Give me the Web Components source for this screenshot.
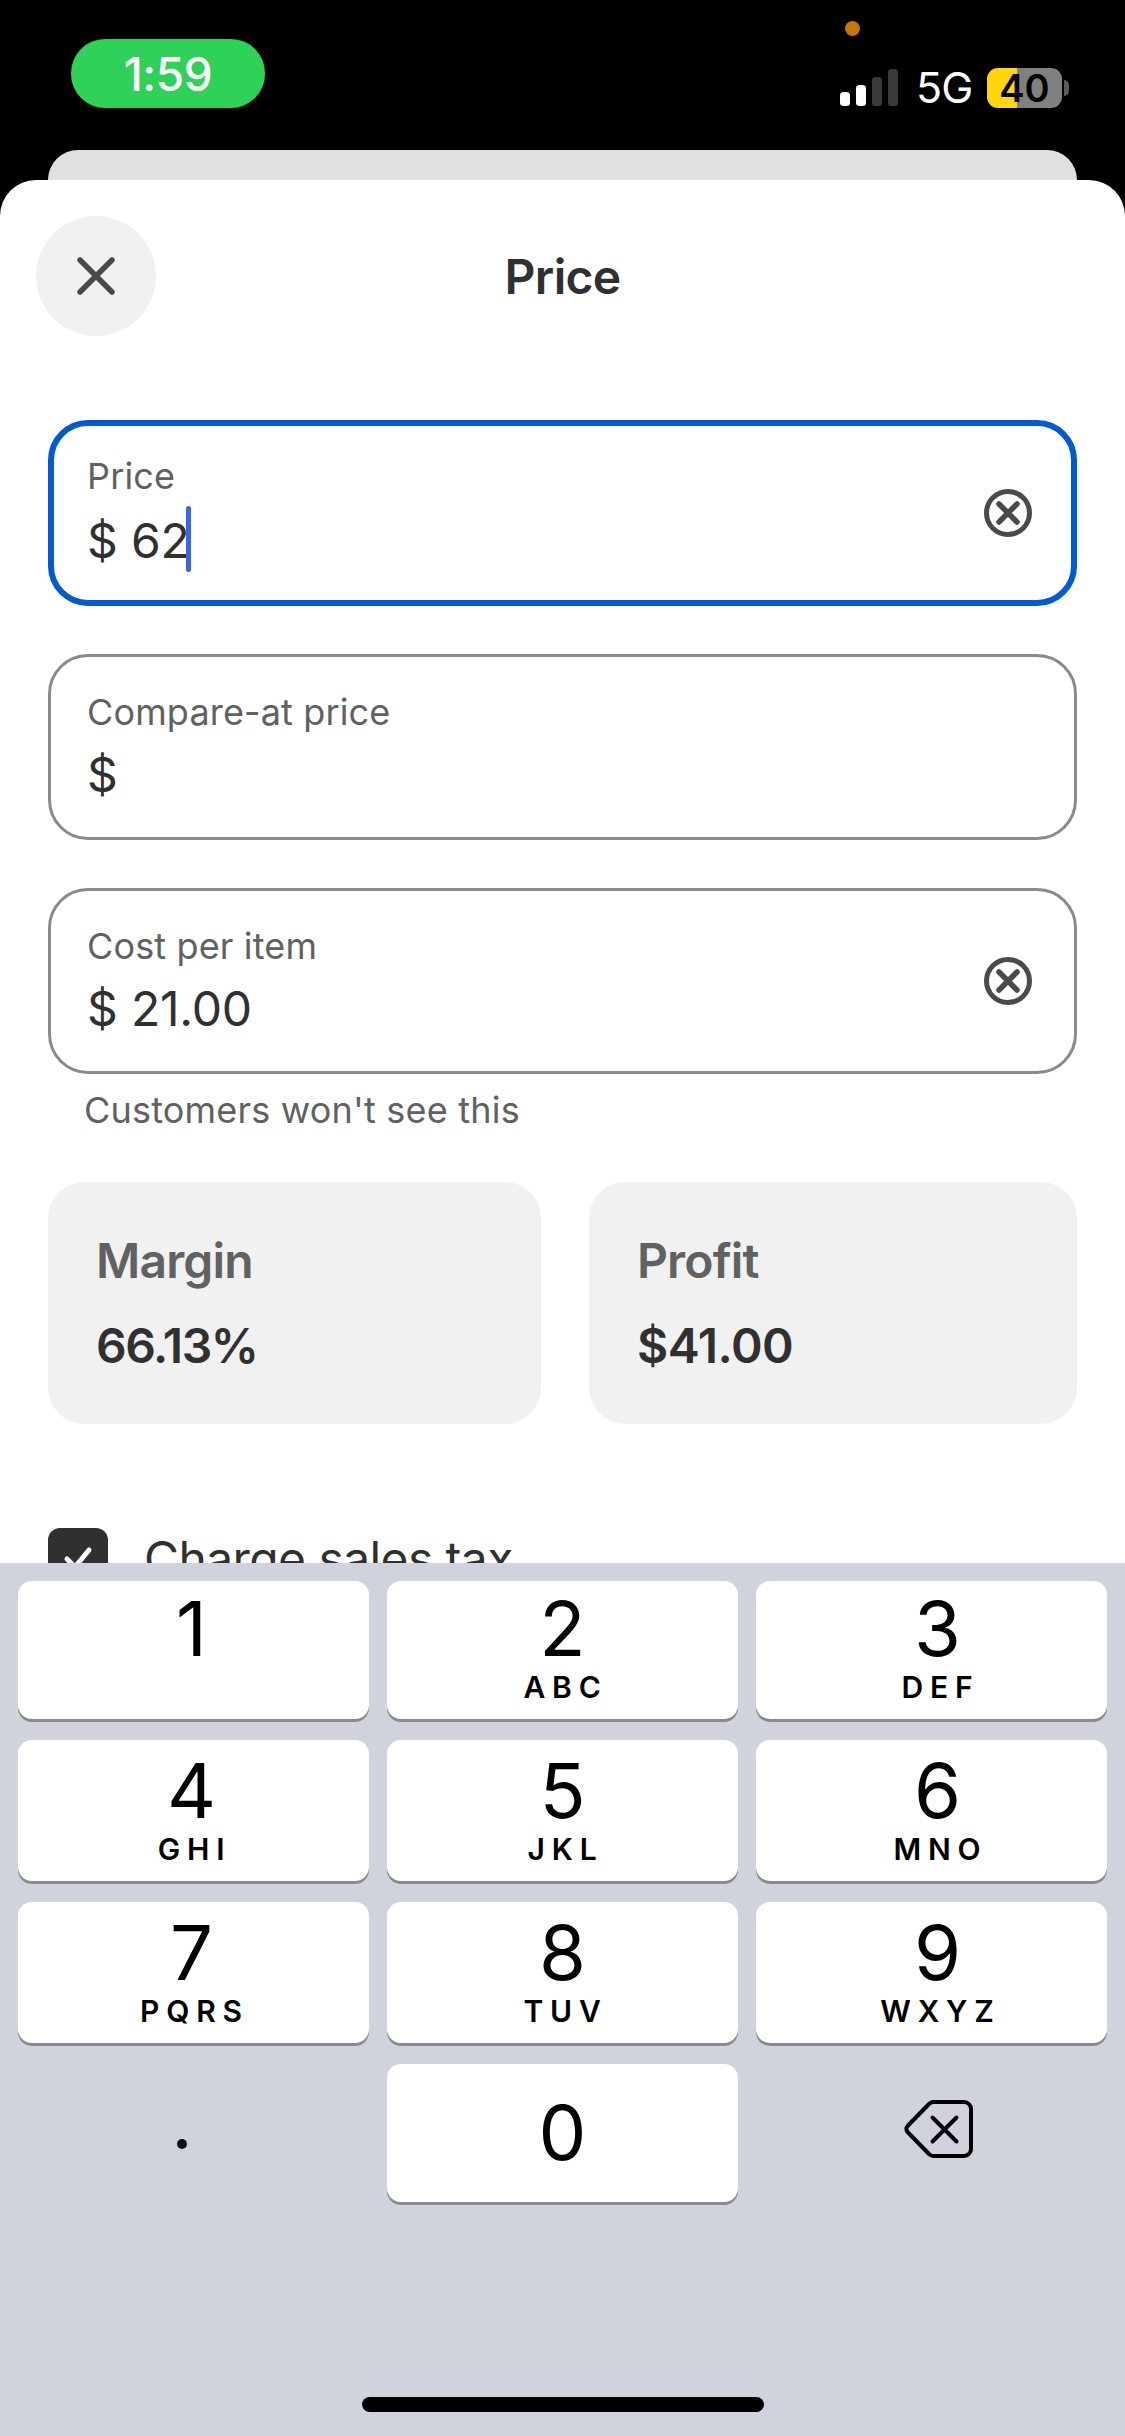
<!DOCTYPE html>
<html><head><meta charset="utf-8">
<style>
html,body{margin:0;padding:0;background:#000;}
body{width:1125px;height:2436px;overflow:hidden;font-family:Inter,"Liberation Sans",sans-serif;display:flex;flex-direction:column;}
</style></head><body>
<status-bar></status-bar>
<price-sheet>
  <price-field label="Price" value="$ 62" focused clear></price-field>
  <price-field label="Compare-at price" value="$"></price-field>
  <price-field label="Cost per item" value="$ 21.00" clear helper="Customers won't see this"></price-field>
  <div slot="stats" style="display:flex;gap:48px;">
    <stat-card label="Margin" value="66.13%" vs="-1.4px" style="flex:0 0 493px"></stat-card>
    <stat-card label="Profit" value="$41.00" vs="-.5px" style="flex:0 0 488px"></stat-card>
  </div>
  <check-row slot="check" text="Charge sales tax"></check-row>
</price-sheet>
<num-pad></num-pad>
<script>
function def(name, css, html){
  customElements.define(name, class extends HTMLElement{
    connectedCallback(){
      if(this.shadowRoot) return;
      const r=this.attachShadow({mode:'open'});
      r.innerHTML='<style>'+css+'</style>'+(typeof html==='function'?html(this):html);
    }
  });
}
const esc=s=>(s||'').replace(/&/g,'&amp;').replace(/</g,'&lt;');
def('status-bar',`
:host{display:flex;flex:0 0 150px;height:150px;background:#000;position:relative;justify-content:space-between;box-sizing:border-box;padding:39px 56px 0 71px;color:#fff;}
.pill{width:194px;height:69px;border-radius:34px;background:#30d158;display:flex;align-items:center;justify-content:center;font:500 46px Inter,sans-serif;letter-spacing:-.5px;}
.right{display:flex;align-items:flex-start;gap:18px;padding-top:29px;height:40px;position:relative;}
.dot{position:absolute;left:5px;top:-18px;width:15px;height:15px;border-radius:50%;background:#c97500;}
.sig{display:flex;align-items:flex-end;gap:6px;height:37px;margin-top:1px;}
.sig i{display:block;width:10px;border-radius:3.5px;background:#fff;}
.sig i.off{background:#3a3a3a;}
.g{font:400 43px/38px Inter,sans-serif;height:38px;letter-spacing:-1px;width:53px;}
.bat{display:flex;align-items:center;gap:2px;}
.body{width:75px;height:40px;border-radius:11px;background:linear-gradient(90deg,#ffd60a 0 30px,#808080 30px);color:#000;font:600 38px/40px Inter,sans-serif;text-align:center;}
.nub{width:5px;height:16px;border-radius:0 6px 6px 0;background:#5c5c5c;}
`,`<div class="pill">1:59</div>
<div class="right"><span class="dot"></span>
<div class="sig"><i style="height:14px"></i><i style="height:21px"></i><i class="off" style="height:29px"></i><i class="off" style="height:37px"></i></div>
<div class="g">5G</div>
<div class="bat"><div class="body">40</div><div class="nub"></div></div></div>`);

def('price-sheet',`
:host{display:block;flex:1;min-height:0;position:relative;background:#000;}
.back{position:absolute;left:48px;right:48px;top:0;height:60px;background:#e0e0e0;border-radius:30px 30px 0 0;}
.sheet{position:absolute;left:0;right:0;top:30px;bottom:0;background:#fff;border-radius:36px 36px 0 0;overflow:hidden;box-sizing:border-box;padding:36px 48px 0;display:flex;flex-direction:column;}
header{display:flex;align-items:center;margin:0 -12px;height:120px;position:relative;flex:none;}
.close{width:120px;height:120px;border-radius:50%;background:#f1f1f1;display:flex;align-items:center;justify-content:center;}
h1{position:absolute;left:0;right:0;top:0;bottom:0;margin:0;display:flex;align-items:center;justify-content:center;font:600 48px Inter,sans-serif;letter-spacing:-.7px;color:#303030;}
.fields{display:flex;flex-direction:column;gap:48px;margin-top:84px;}
.stats{margin-top:50px;}
.check{margin-top:102px;}
`,`<div class="back"></div><div class="sheet">
<header><div class="close"><svg width="44" height="44" viewBox="0 0 44 44" fill="none" stroke="#4a4a4a" stroke-width="5.5" stroke-linecap="round"><path d="M6 6 38 38M38 6 6 38"/></svg></div><h1>Price</h1></header>
<div class="fields"><slot></slot></div>
<div class="stats"><slot name="stats"></slot></div>
<div class="check"><slot name="check"></slot></div>
</div>`);

def('price-field',`
:host{display:block;}
.box{box-sizing:border-box;height:186px;border:3px solid #8a8a8a;border-radius:40px;padding:0 36px;display:flex;align-items:center;justify-content:space-between;background:#fff;}
.box.f{border:6px solid #005bd3;padding:0 33px;}
.txt{display:flex;flex-direction:column;margin-top:-3px;}
.l{font:400 36px/44px Inter,sans-serif;letter-spacing:.15px;color:#616161;}
.v{font:400 48px/60px Inter,sans-serif;letter-spacing:-.2px;color:#303030;margin-top:11px;margin-bottom:-3px;display:flex;align-items:center;}
.caret{display:inline-block;width:5px;height:66px;background:#3f63e6;border-radius:3px;margin-left:-4px;margin-top:-3px;}
.h{font:400 36px/44px Inter,sans-serif;letter-spacing:.2px;color:#616161;margin:14px 0 0 36px;}
svg{flex:none;margin-right:6px;}
`,h=>{
 const f=h.hasAttribute('focused');
 return `<div class="box ${f?'f':''}"><div class="txt"><div class="l">${esc(h.getAttribute('label'))}</div><div class="v">${esc(h.getAttribute('value'))}${f?'<span class="caret"></span>':''}</div></div>${h.hasAttribute('clear')?'<svg width="48" height="48" viewBox="0 0 48 48" fill="none" stroke="#4a4a4a" stroke-linecap="round"><circle cx="24" cy="24" r="21.5" stroke-width="5"/><path d="M15 15 33 33M33 15 15 33" stroke-width="5.5"/></svg>':''}</div>${h.getAttribute('helper')?`<div class="h">${esc(h.getAttribute('helper'))}</div>`:''}`;
});

def('stat-card',`
:host{display:block;}
.c{box-sizing:border-box;height:242px;background:#f1f1f1;border-radius:36px;padding:49px 48px 0;}
.l{font:600 48px/60px Inter,sans-serif;letter-spacing:-.85px;color:#616161;}
.v{font:600 48px/60px Inter,sans-serif;color:#303030;margin-top:25px;}
`,h=>`<div class="c"><div class="l">${esc(h.getAttribute('label'))}</div><div class="v" style="letter-spacing:${h.getAttribute('vs')}">${esc(h.getAttribute('value'))}</div></div>`);

def('check-row',`
:host{display:flex;align-items:center;gap:36px;}
.b{width:60px;height:60px;border-radius:12px;background:#303030;display:flex;align-items:center;justify-content:center;flex:none;}
.t{font:400 48px/60px Inter,sans-serif;letter-spacing:-.6px;color:#303030;margin-top:3px;}
`,h=>`<div class="b"><svg width="36" height="36" viewBox="0 0 36 36" fill="none" stroke="#fff" stroke-width="5" stroke-linecap="round" stroke-linejoin="round"><path d="M7 19 15 27 29 10"/></svg></div><div class="t">${esc(h.getAttribute('text'))}</div>`);

def('pad-key',`
:host{display:block;}
.k{box-sizing:border-box;height:100%;border-radius:14px;background:#fff;box-shadow:0 3px 0 #898a8d;display:flex;flex-direction:column;align-items:center;color:#000;}
.d{font:400 76px/76px Inter,sans-serif;height:90px;display:flex;align-items:center;}
.s{font:600 30px/36px Inter,sans-serif;letter-spacing:6.8px;margin-right:-6px;margin-top:-4px;}
`,h=>`<div class="k" style="${h.getAttribute('pad')||''}"><div class="d" style="margin-top:${h.getAttribute('top')||'2'}px">${h.getAttribute('d')}</div><div class="s">${h.getAttribute('s')||''}</div></div>`);

const L='padding-right:4px',R='padding-left:12px';
def('num-pad',`
:host{display:block;position:absolute;left:0;right:0;top:1563px;bottom:0;background:#d0d3db;}
.g{display:grid;grid-template-columns:repeat(3,351px);grid-template-rows:138px 141px 141px 138px;column-gap:18px;row-gap:21px;padding:18px 18px 0;}
.per{position:relative;}
.per i{position:absolute;left:159px;top:75px;width:10px;height:10px;border-radius:50%;background:#111;}
.bs{display:flex;justify-content:center;padding:36px 0 0 14px;box-sizing:border-box;}
.home{position:absolute;left:362px;top:834px;width:402px;height:15px;border-radius:8px;background:#000;}
`,`<div class="g">
<pad-key d="1" s=" " pad="${L}"></pad-key><pad-key d="2" s="ABC"></pad-key><pad-key d="3" s="DEF" pad="${R}"></pad-key>
<pad-key d="4" s="GHI" top="5" pad="${L}"></pad-key><pad-key d="5" s="JKL" top="5"></pad-key><pad-key d="6" s="MNO" top="5" pad="${R}"></pad-key>
<pad-key d="7" s="PQRS" top="5" pad="${L}"></pad-key><pad-key d="8" s="TUV" top="5"></pad-key><pad-key d="9" s="WXYZ" top="5" pad="${R}"></pad-key>
<div class="per"><i></i></div><pad-key d="0" top="23"></pad-key>
<div class="bs"><svg width="70" height="58" viewBox="0 0 70 58" fill="none" stroke="#000" stroke-width="4" stroke-linejoin="round" stroke-linecap="round"><path d="M29 2H60a7 7 0 0 1 7 7V49a7 7 0 0 1-7 7H29a6 6 0 0 1-4-2L3.5 32a4.5 4.5 0 0 1 0-6L25 4a6 6 0 0 1 4-2Z"/><path d="M28.5 17.5 52.5 41.5M52.5 17.5 28.5 41.5"/></svg></div>
</div><div class="home"></div>`);
</script>
</body></html>
